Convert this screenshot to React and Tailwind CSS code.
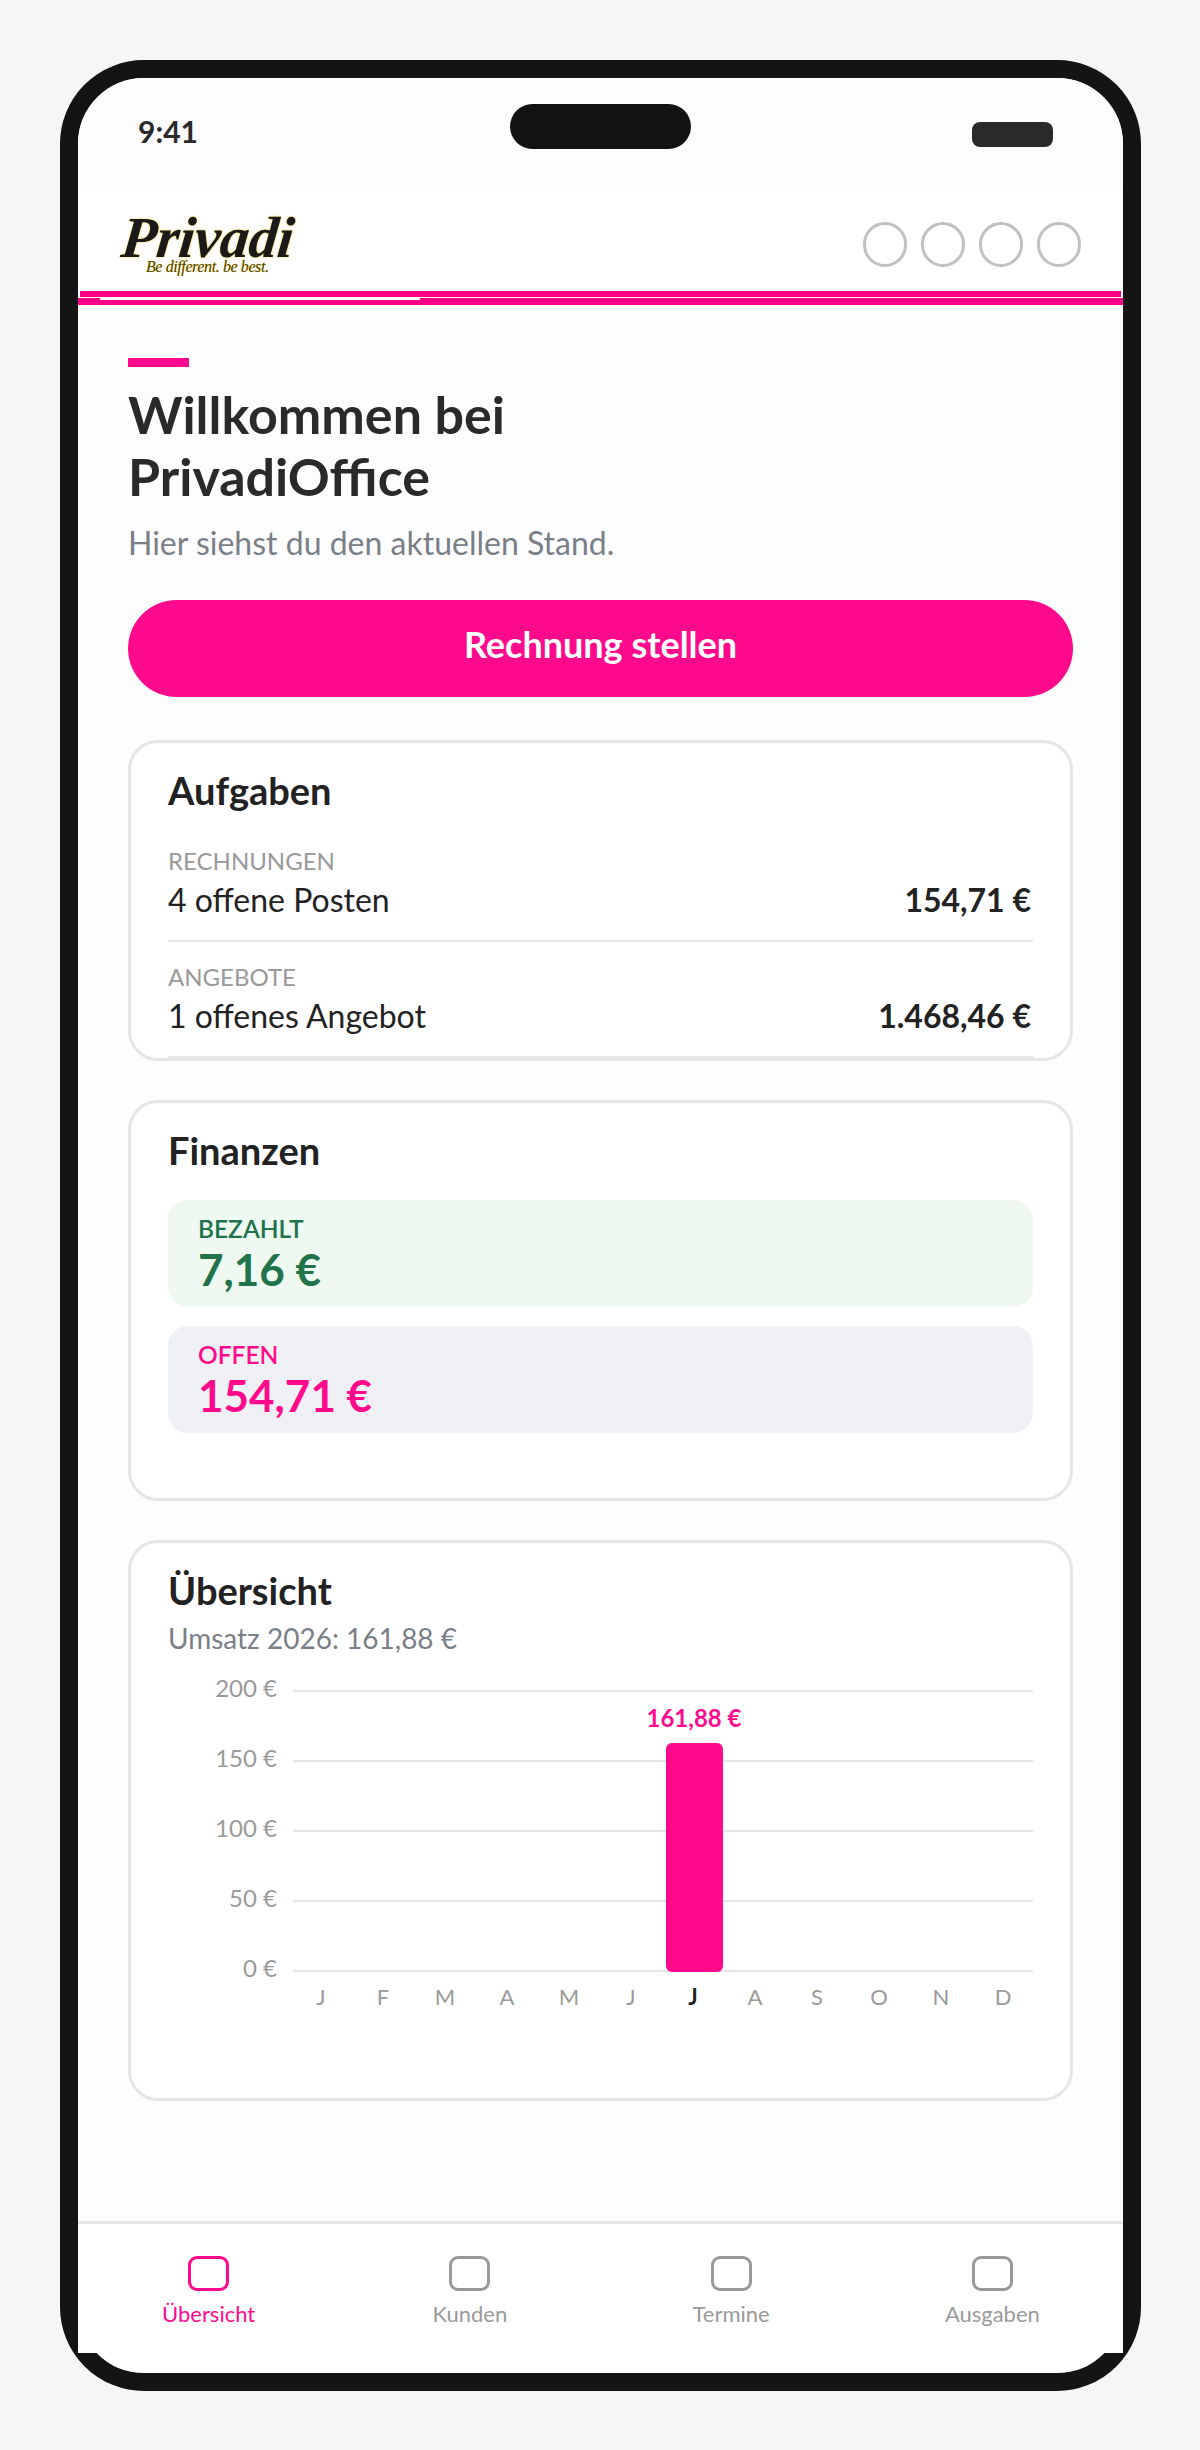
const months = ["J", "F", "M", "A", "M", "J", "J", "A", "S", "O", "N", "D"];
const ticks = ["200 €", "150 €", "100 €", "50 €", "0 €"];
const navItems = ["Übersicht", "Kunden", "Termine", "Ausgaben"];

function Card({ className, children }) {
  return (
    <section className={`bg-white border-[3px] border-[#e6e6e6] rounded-[30px] px-[37px] ${className}`}>
      {children}
    </section>
  );
}

function TaskRow({ label, text, amount }) {
  return (
    <div className="h-[116px] border-b-2 border-[#e6e6e6] pt-[20px]">
      <div className="text-[24px] leading-[30px] text-[#999999]">{label}</div>
      <div className="mt-[4px] flex justify-between items-center text-[32px] leading-[40px] text-[#222222]">
        <span>{text}</span>
        <span className="font-bold pr-[2px]">{amount}</span>
      </div>
    </div>
  );
}

function MoneyBox({ label, amount, bg, color }) {
  return (
    <div className={`h-[107px] rounded-[20px] px-[30px] pt-[14px] ${bg} ${color}`}>
      <div className="text-[24.5px] leading-[30px] font-semibold">{label}</div>
      <div className="text-[44px] leading-[50px] font-bold">{amount}</div>
    </div>
  );
}

function Chart() {
  return (
    <div className="flex mt-[17px] h-[340px]">
      <div className="w-[124px] h-[310px] shrink-0 flex flex-col justify-between items-end pr-[15px] text-[24px] leading-[30px] text-[#9a9a9a]">
        {ticks.map((t) => (
          <span key={t}>{t}</span>
        ))}
      </div>
      <div className="flex-1 min-w-0 relative">
        <div className="ml-[1px] h-[282px] mt-[17px] flex flex-col justify-between">
          {ticks.map((t) => (
            <div key={t} className="h-[2px] bg-[#e6e6e6]" />
          ))}
        </div>
        <div className="absolute left-[374px] top-[70px] w-[57px] h-[229px] bg-[#ff0a8c] rounded-[6px]" />
        <div className="absolute left-[352px] top-[30px] w-[100px] text-center text-[24px] leading-[30px] font-bold text-[#ff0a8c]">
          161,88 €
        </div>
        <div className="grid grid-cols-12 w-[744px] mt-[10px] -ml-[2px]">
          {months.map((m, i) => (
            <span
              key={i}
              className={`text-center text-[22px] leading-[30px] ${i === 6 ? "font-bold text-[#222222]" : "text-[#9a9a9a]"}`}
            >
              {m}
            </span>
          ))}
        </div>
      </div>
    </div>
  );
}

export default function App() {
  return (
    <div className="min-h-screen bg-[#f6f6f6] p-[60px] font-['Lato',sans-serif]">
      <div className="w-[1081px] h-[2331px] border-[18px] border-[#141416] rounded-[84px] bg-white flex flex-col">
        <div className="h-[109px] shrink-0 rounded-t-[66px] bg-[#fdfdfd] flex items-start pl-[60px] pr-[70px] pt-[26px] relative">
          <span className="text-[30px] leading-[36px] mt-[9px] font-bold text-[#2a2a2a]">9:41</span>
          <div className="absolute left-[432px] top-[26px] w-[181px] h-[45px] rounded-full bg-[#121212]" />
          <div className="ml-auto mt-[18px] w-[81px] h-[25px] rounded-[8px] bg-[#2a2a2a]" />
        </div>

        <header className="h-[110px] shrink-0 mx-[2px] bg-white border-b-[6px] border-[#ff0088] flex items-center justify-between pl-[40px] pr-[40px] pt-[11px]">
          <div className="flex flex-col w-[180px] font-['Liberation_Serif',serif] italic">
            <span className="h-[44px] pl-[2px] font-bold text-[58px] leading-[48px] tracking-[-0.3px] text-[#1a1a1a] -skew-x-[6deg] [text-shadow:0_0_2px_#e8c400]">
              Privadi
            </span>
            <span className="h-[18px] pl-[26px] text-[16px] leading-[18px] tracking-[-0.4px] text-[#54440f] whitespace-nowrap [text-shadow:0_0_1px_#e8c400]">
              Be different. be best.
            </span>
          </div>
          <div className="flex gap-[14px]">
            {[0, 1, 2, 3].map((i) => (
              <div key={i} className="w-[44px] h-[45px] rounded-full border-[3px] border-[#c0c0c0]" />
            ))}
          </div>
        </header>
        <div className="h-[7px] shrink-0 mt-[1px] bg-[#ff0088] relative">
          <div className="absolute left-[22px] top-0 w-[320px] h-[2px] bg-white" />
        </div>

        <main className="flex-1 bg-[#fdfdfd] px-[50px] pt-[53px]">
          <div className="w-[61px] h-[9px] bg-[#ff0a8c]" />
          <h1 className="mt-[16px] text-[52px] leading-[62px] font-bold text-[#2a2a2a]">
            Willkommen bei
            <br />
            PrivadiOffice
          </h1>
          <p className="mt-[11px] text-[32px] leading-[50px] text-[#7a7f87]">Hier siehst du den aktuellen Stand.</p>
          <button className="block w-full h-[97px] mt-[32px] pb-[10px] rounded-full bg-[#ff0a8c] text-white text-[36px] font-bold">
            Rechnung stellen
          </button>

          <Card className="h-[321px] mt-[43px] pt-[23px]">
            <h2 className="text-[38px] leading-[48px] font-bold text-[#222222]">Aufgaben</h2>
            <div className="mt-[12px]">
              <TaskRow label="RECHNUNGEN" text="4 offene Posten" amount="154,71 €" />
              <TaskRow label="ANGEBOTE" text="1 offenes Angebot" amount="1.468,46 €" />
            </div>
          </Card>

          <Card className="h-[401px] mt-[39px] pt-[23px]">
            <h2 className="text-[38px] leading-[48px] font-bold text-[#222222]">Finanzen</h2>
            <div className="mt-[26px] flex flex-col gap-[19px]">
              <MoneyBox label="BEZAHLT" amount="7,16 €" bg="bg-[#eff8f1]" color="text-[#20734a]" />
              <MoneyBox label="OFFEN" amount="154,71 €" bg="bg-[#f0f1f5]" color="text-[#ff0a8c]" />
            </div>
          </Card>

          <Card className="h-[561px] mt-[39px] pt-[23px]">
            <h2 className="text-[38px] leading-[48px] font-bold text-[#222222]">Übersicht</h2>
            <p className="mt-[6px] text-[28px] leading-[36px] text-[#7a7f87]">Umsatz 2026: 161,88 €</p>
            <Chart />
          </Card>
        </main>

        <nav className="h-[132px] shrink-0 mb-[20px] bg-white border-t-[3px] border-[#e6e6e6] grid grid-cols-4 pt-[32px]">
          {navItems.map((item, i) => (
            <div
              key={item}
              className={`flex flex-col items-center ${i === 0 ? "text-[#ff0a8c]" : "text-[#9a9a9a]"}`}
            >
              <div
                className={`w-[41px] h-[35px] rounded-[9px] border-[3px] ${i === 0 ? "border-[#ff0a8c]" : "border-[#999999]"}`}
              />
              <span className="mt-[10px] text-[22px] leading-[26px]">{item}</span>
            </div>
          ))}
        </nav>
      </div>
    </div>
  );
}
